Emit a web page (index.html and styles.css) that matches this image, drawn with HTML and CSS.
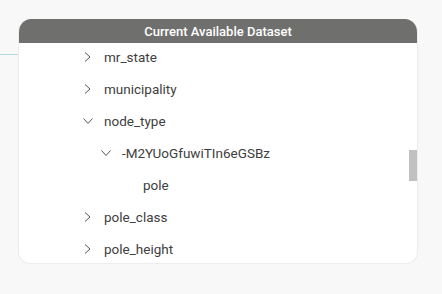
FILE: index.html
```html
<!DOCTYPE html>
<html lang="en">
<head>
    <meta charset="UTF-8">
    <meta name="viewport" content="width=device-width, initial-scale=1.0">
    <title>Current Available Dataset</title>
    <link rel="stylesheet" href="styles.css">
</head>
<body>
    <div class="page">
        <div class="stub"></div>
        <div class="card">
            <div class="card-header">Current Available Dataset</div>
            <div class="tree">
                <ul class="tree-list">
                    <li class="node">
                        <svg class="chev" viewBox="0 0 10 10"><polyline points="2,0.5 7,5 2,9.5"/></svg>
                        <span>mr_state</span>
                    </li>
                    <li class="node">
                        <svg class="chev" viewBox="0 0 10 10"><polyline points="2,0.5 7,5 2,9.5"/></svg>
                        <span>municipality</span>
                    </li>
                    <li class="node">
                        <svg class="chev" viewBox="0 0 10 10"><polyline points="0.5,2.5 5,7.5 9.5,2.5"/></svg>
                        <span>node_type</span>
                    </li>
                    <li class="node level-2">
                        <svg class="chev" viewBox="0 0 10 10"><polyline points="0.5,2.5 5,7.5 9.5,2.5"/></svg>
                        <span>-M2YUoGfuwiTIn6eGSBz</span>
                    </li>
                    <li class="node level-3">
                        <span>pole</span>
                    </li>
                    <li class="node">
                        <svg class="chev" viewBox="0 0 10 10"><polyline points="2,0.5 7,5 2,9.5"/></svg>
                        <span>pole_class</span>
                    </li>
                    <li class="node">
                        <svg class="chev" viewBox="0 0 10 10"><polyline points="2,0.5 7,5 2,9.5"/></svg>
                        <span>pole_height</span>
                    </li>
                </ul>
                <div class="scroll-thumb"></div>
            </div>
        </div>
    </div>
</body>
</html>
```

FILE: styles.css
```css
body {
    margin: 0;
    padding: 0;
    background-color: #f8f8f8;
    font-family: Roboto, "Liberation Sans", sans-serif;
}
.page {
    display: flex;
    align-items: flex-start;
    padding-top: 19px;
}
.stub {
    width: 18px;
    height: 1px;
    margin-top: 35px;
    background-color: #b4dbe2;
}
.card {
    box-sizing: border-box;
    width: 400px;
    height: 245px;
    background-color: #fff;
    border: 1px solid #ececec;
    border-top: none;
    border-radius: 13px 13px 12px 12px;
    overflow: hidden;
}
.card-header {
    height: 24px;
    line-height: 25px;
    background-color: #6f706e;
    color: #fff;
    font-size: 13px;
    font-weight: 500;
    text-align: center;
}
.tree {
    position: relative;
    height: 220px;
    overflow: hidden;
}
.tree-list {
    list-style: none;
    margin: -2px 0 0 0;
    padding: 0;
}
.node {
    display: flex;
    align-items: center;
    height: 32px;
    padding-left: 64px;
    font-size: 13.5px;
    color: #404040;
}
.node span {
    margin-left: 11px;
}
.chev {
    width: 10px;
    height: 10px;
    fill: none;
    stroke: #555;
    stroke-width: 1;
}
.level-2 {
    padding-left: 82px;
}
.level-3 {
    padding-left: 113px;
}
.scroll-thumb {
    position: absolute;
    right: 0;
    top: 107px;
    width: 8px;
    height: 31px;
    background-color: #c1c1c1;
}
```
